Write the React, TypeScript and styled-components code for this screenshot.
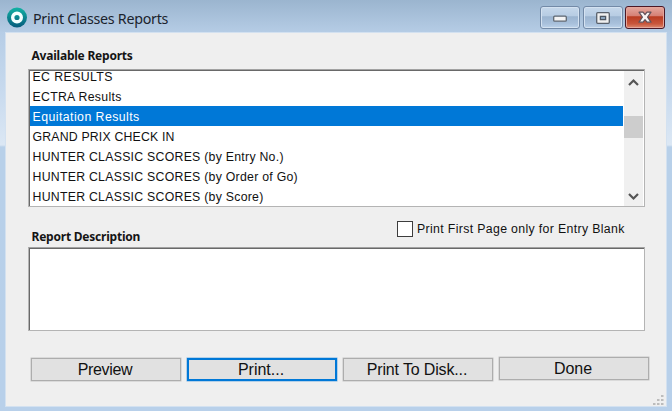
import React from 'react';
import styled, { createGlobalStyle } from 'styled-components';

const GlobalStyle = createGlobalStyle`
  * { box-sizing: border-box; }
  body { margin: 0; overflow: hidden; }
  button { font: inherit; padding: 0; margin: 0; border-radius: 0; }
`;

const WindowFrame = styled.div`
  width: 672px;
  height: 411px;
  padding: 0 5px 4px;
  display: flex;
  flex-direction: column;
  color: #111;
  font-family: 'Liberation Sans', Arial, sans-serif;
  background:
    linear-gradient(#9bb5cf, #b5cce5 32px) 0 0 / 100% 32px no-repeat,
    linear-gradient(#b6cde6, #c8daee 60px, #dbe7f4 112px, #dbe7f4 113px, #b8d0e9 115px, #b8d0ea) 0 32px / 100% 379px no-repeat;
`;

const TitleBar = styled.header`
  height: 32px;
  flex: none;
  display: flex;
  align-items: flex-start;
  padding: 6px 2px 0;
`;

const AppIcon = styled.svg`
  width: 20px;
  height: 22px;
  margin-top: 1px;
`;

const Title = styled.h1`
  flex: 1;
  margin: 2px 0 0 6px;
  font: 400 14.3px/22px 'Noto Sans', sans-serif;
  letter-spacing: -0.3px;
  color: #1b232d;
  white-space: nowrap;
`;

const WindowControls = styled.div`
  display: flex;
  gap: 2.5px;
`;

const ControlButton = styled.button<{ $close?: boolean }>`
  width: 40px;
  height: 23px;
  display: flex;
  align-items: center;
  justify-content: center;
  border: 1px solid ${p => (p.$close ? '#4b1826' : '#738aa7')};
  border-radius: 3px;
  box-shadow: inset 0 0 0 1px ${p => (p.$close ? '#e5a69b' : '#d4e2f1')};
  background: ${p =>
    p.$close
      ? 'linear-gradient(#e4a89f, #d58074 43%, #b93c22 46%, #c9563c 80%, #dc8c72)'
      : 'linear-gradient(#c6d8eb, #b7cce3 43%, #9bb4d0 46%, #a9c1dc 80%, #bdd3ea)'};
`;

const Client = styled.main`
  flex: 1;
  display: flex;
  flex-direction: column;
  padding: 14px 17px 0 23px;
  background: #efefef;
  box-shadow: 0 0 0 1px #d3e1f0 inset;
`;

const SectionLabel = styled.h2`
  margin: 0;
  padding-left: 3.5px;
  font: 700 12px/20px 'Noto Sans', sans-serif;
  letter-spacing: -0.22px;
  color: #151515;
  white-space: nowrap;
`;

const Field = styled.div`
  width: 617px;
  flex: none;
  background: #fff;
  border: 1px solid #b4b4b4;
  border-top-color: #a2a2a2;
  box-shadow: inset 1px 1px 0 #696969;
`;

const ListBox = styled(Field)`
  height: 138px;
  margin-top: 3px;
  padding: 1px 1px 0 1px;
  display: flex;
`;

const Rows = styled.ul`
  list-style: none;
  margin: 0;
  padding: 0;
  width: 593px;
  height: 135px;
  overflow: hidden;
`;

const Row = styled.li<{ $selected?: boolean; $spacing: number }>`
  height: 20px;
  padding-left: 2.5px;
  font-size: 12.3px;
  line-height: 22px;
  letter-spacing: ${p => p.$spacing}px;
  white-space: nowrap;
  color: ${p => (p.$selected ? '#fff' : '#111')};
  background: ${p => (p.$selected ? '#0078d7' : 'transparent')};
  &:first-child {
    height: 15px;
    line-height: 12px;
  }
`;

const Scrollbar = styled.div`
  width: 19px;
  margin-left: 1px;
  display: flex;
  flex-direction: column;
  background: #f0f0f0;
`;

const Arrow = styled.svg`
  width: 19px;
  height: 20px;
  flex: none;
`;

const Track = styled.div`
  flex: 1;
  padding-top: 25px;
`;

const Thumb = styled.div`
  height: 22px;
  background: #cdcdcd;
`;

const OptionsRow = styled.div`
  height: 40px;
  display: flex;
  justify-content: space-between;
  padding-right: 23px;
`;

const DescriptionLabel = styled(SectionLabel)`
  margin-top: 20px;
`;

const CheckLabel = styled.label`
  display: flex;
  gap: 4px;
  margin-top: 14px;
  height: 17px;
  width: 230px;
  font-size: 12.3px;
  line-height: 17px;
  letter-spacing: 0.35px;
  white-space: nowrap;
`;

const CheckBox = styled.span`
  width: 16px;
  height: 16px;
  flex: none;
  border: 1px solid #3d3d3d;
  background: #fff;
`;

const Description = styled(Field)`
  height: 84px;
`;

const Actions = styled.footer`
  display: flex;
  gap: 6px;
  margin: 27px 0 0 3px;
`;

const ActionButton = styled.button<{ $primary?: boolean; $raised?: boolean; $spacing?: number }>`
  width: 150px;
  height: 23px;
  margin-top: ${p => (p.$raised ? -1 : 0)}px;
  border: ${p => (p.$primary ? '2px solid #0078d7' : '1px solid #adadad')};
  box-shadow: 0 0 0 ${p => (p.$primary ? '0.5px #78b1e1' : '0.5px #c5c5c5')};
  background: #e1e1e1;
  color: #111;
  font-size: 16px;
  line-height: 19px;
  letter-spacing: ${p => p.$spacing ?? 0}px;
  padding-right: 2px;
`;

const GripRow = styled.div`
  display: flex;
  justify-content: flex-end;
  margin: 14px -14px 0 0;
`;

const reports = [
  { name: 'EC RESULTS', spacing: 0.41 },
  { name: 'ECTRA Results', spacing: 0.28 },
  { name: 'Equitation Results', spacing: 0.45 },
  { name: 'GRAND PRIX CHECK IN', spacing: 0.18 },
  { name: 'HUNTER CLASSIC SCORES (by Entry No.)', spacing: 0.26 },
  { name: 'HUNTER CLASSIC SCORES (by Order of Go)', spacing: 0.26 },
  { name: 'HUNTER CLASSIC SCORES (by Score)', spacing: 0.26 },
];

export default function App() {
  return (
    <>
      <GlobalStyle />
      <WindowFrame>
        <TitleBar>
          <AppIcon viewBox="0 0 20 22">
            <defs>
              <linearGradient id="ring" x1="0" y1="0" x2="0" y2="1">
                <stop offset="0" stopColor="#12b3a4" />
                <stop offset="1" stopColor="#075a7c" />
              </linearGradient>
            </defs>
            <circle cx="10" cy="10.5" r="10" fill="url(#ring)" />
            <circle cx="10" cy="10.5" r="4.3" fill="none" stroke="#f4ffff" strokeWidth="3.4" />
          </AppIcon>
          <Title>Print Classes Reports</Title>
          <WindowControls>
            <ControlButton aria-label="Minimize">
              <svg width="14" height="8" viewBox="0 0 14 8">
                <rect x=".7" y="2.2" width="12.6" height="5" rx="1" fill="#f3f3f3" stroke="#5f6771" strokeWidth="1.3" />
              </svg>
            </ControlButton>
            <ControlButton aria-label="Maximize">
              <svg width="14" height="12" viewBox="0 0 14 12">
                <rect x=".7" y=".7" width="12.6" height="10.6" rx="1" fill="#f0f0f0" stroke="#59616c" strokeWidth="1.3" />
                <rect x="4.4" y="4.4" width="5.2" height="3.2" fill="#8fa9c3" stroke="#4d5661" strokeWidth="1.3" />
              </svg>
            </ControlButton>
            <ControlButton $close aria-label="Close">
              <svg width="14" height="13" viewBox="0 0 14 13">
                <path d="M1 1.2h4L7 3.7l2-2.5h4L9.6 6.2 13 11.2H9L7 8.7l-2 2.5H1l3.4-5z" fill="#f6f3f3" stroke="#62525b" strokeWidth="1.2" strokeLinejoin="round" />
              </svg>
            </ControlButton>
          </WindowControls>
        </TitleBar>
        <Client>
          <SectionLabel>Available Reports</SectionLabel>
          <ListBox>
            <Rows>
              {reports.map(r => (
                <Row key={r.name} $spacing={r.spacing} $selected={r.name === 'Equitation Results'}>
                  {r.name}
                </Row>
              ))}
            </Rows>
            <Scrollbar>
              <Arrow viewBox="0 0 19 20">
                <path d="M5 14l4.5-4.5L14 14" fill="none" stroke="#555" strokeWidth="2.2" />
              </Arrow>
              <Track>
                <Thumb />
              </Track>
              <Arrow viewBox="0 0 19 20">
                <path d="M5 8l4.5 4.5L14 8" fill="none" stroke="#555" strokeWidth="2.2" />
              </Arrow>
            </Scrollbar>
          </ListBox>
          <OptionsRow>
            <DescriptionLabel>Report Description</DescriptionLabel>
            <CheckLabel>
              <CheckBox />
              Print First Page only for Entry Blank
            </CheckLabel>
          </OptionsRow>
          <Description />
          <Actions>
            <ActionButton $spacing={-0.35}>Preview</ActionButton>
            <ActionButton $primary>Print...</ActionButton>
            <ActionButton $spacing={-0.15}>Print To Disk...</ActionButton>
            <ActionButton $raised>Done</ActionButton>
          </Actions>
          <GripRow>
            <svg width="11" height="11" viewBox="0 0 11 11" fill="#bcbcbc">
              <path d="M8 0h2.5v2H8zM4 4h2.5v2H4zM8 4h2.5v2H8zM0 8h2.5v2H0zM4 8h2.5v2H4zM8 8h2.5v2H8z" />
            </svg>
          </GripRow>
        </Client>
      </WindowFrame>
    </>
  );
}
